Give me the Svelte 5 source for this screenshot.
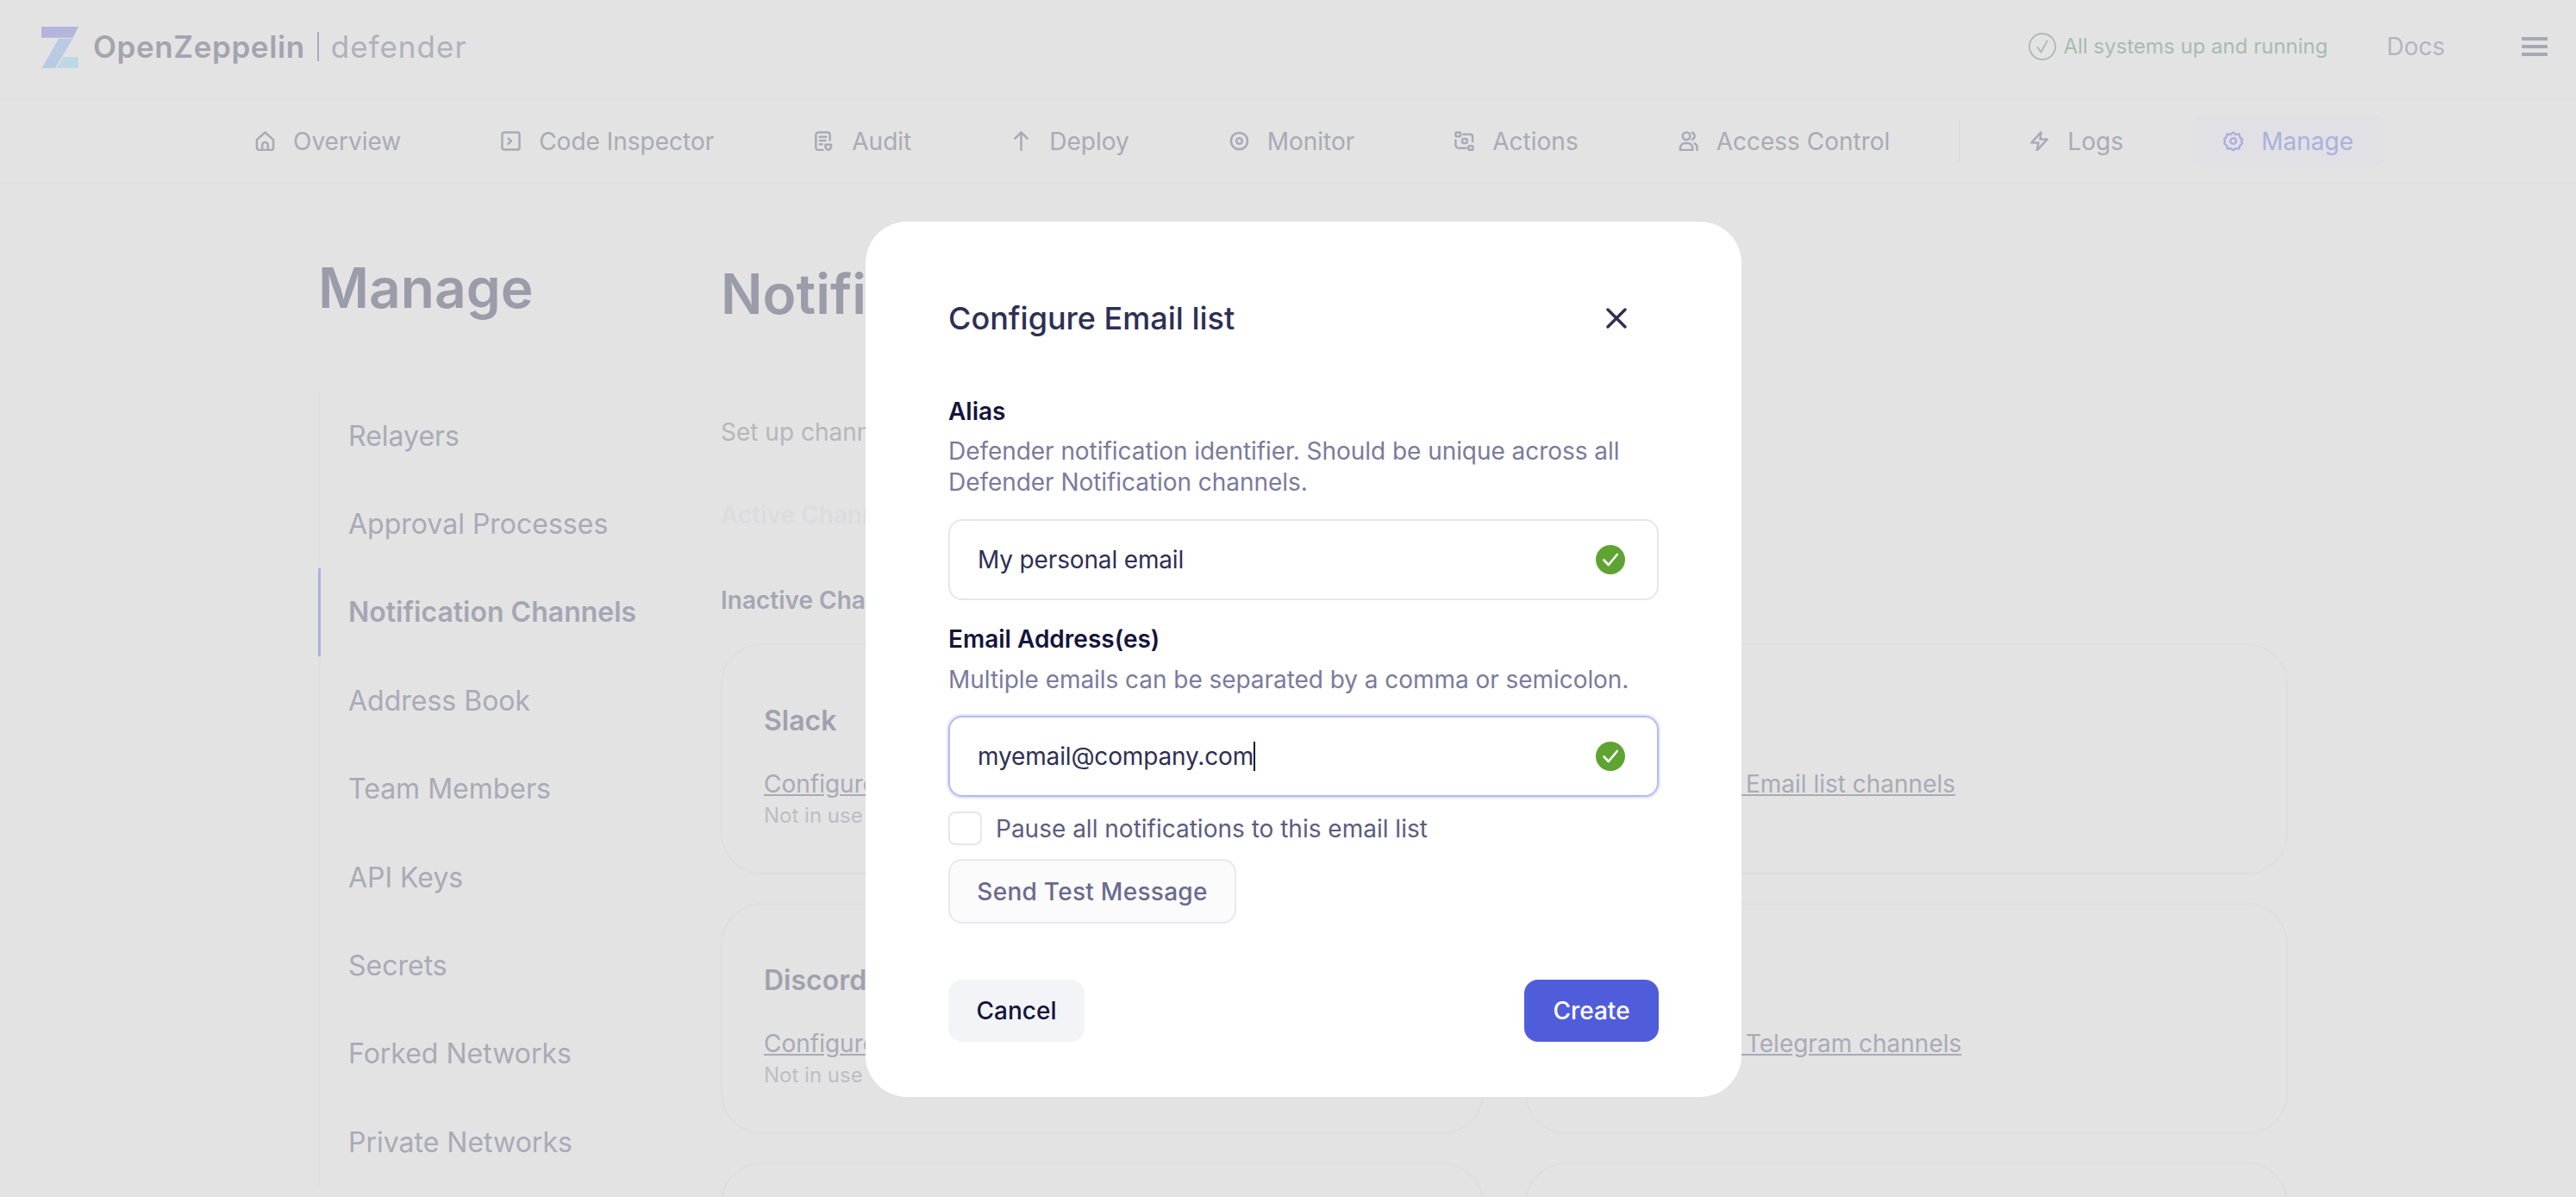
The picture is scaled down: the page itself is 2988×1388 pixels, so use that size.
<script>
  const navItems = [
    { label: 'Overview', icon: 'home' },
    { label: 'Code Inspector', icon: 'code' },
    { label: 'Audit', icon: 'audit' },
    { label: 'Deploy', icon: 'deploy' },
    { label: 'Monitor', icon: 'monitor' },
    { label: 'Actions', icon: 'actions' },
    { label: 'Access Control', icon: 'access' },
  ];

  const sideItems = [
    'Relayers',
    'Approval Processes',
    'Notification Channels',
    'Address Book',
    'Team Members',
    'API Keys',
    'Secrets',
    'Forked Networks',
    'Private Networks',
  ];

  const channels = ['Slack', 'Email', 'Discord', 'Telegram', 'Datadog', 'Webhook'];
  const linkName = { Email: 'Email list' };
</script>

{#snippet navIcon(name)}
  <svg class="nav-icon" viewBox="0 0 24 24" fill="none" stroke="currentColor" stroke-width="2.6" stroke-linecap="round" stroke-linejoin="round">
    {#if name === 'home'}
      <path d="M2 10.5 12 1.6l10 8.9V20a3 3 0 0 1-3 3H5a3 3 0 0 1-3-3z" />
      <path d="M8.5 23v-6a3.5 3.5 0 0 1 7 0v6" />
    {:else if name === 'code'}
      <rect x="1.5" y="1.5" width="21" height="21" rx="2.5" />
      <path d="m9 9 3.5 3L9 15.500" />
    {:else if name === 'audit'}
      <path d="M11 23H5.500a3 3 0 0 1-3-3V4.500a3 3 0 0 1 3-3h11a3 3 0 0 1 3 3v6.500" />
      <path d="M7 7h8M7 11.500h7M7 16h3" />
      <path d="M17.500 23c-2.500-1.200-3.500-2.500-3.500-4.500v-2h7v2c0 2-1 3.300-3.500 4.500z" />
    {:else if name === 'deploy'}
      <path d="M12 23.500V1.500M4.500 9l7.500-7.500L19.500 9" />
    {:else if name === 'monitor'}
      <circle cx="12" cy="12" r="10" />
      <circle cx="12" cy="12" r="3.500" />
    {:else if name === 'actions'}
      <rect x="1.500" y="1.500" width="6" height="5" rx="1.500" />
      <rect x="9.500" y="9.500" width="6" height="5" rx="1.500" />
      <rect x="17" y="18" width="5.500" height="5" rx="1.500" />
      <path d="M11 4h8a3 3 0 0 1 3 3v5.500M14 20.500H5a3.500 3.500 0 0 1-3.500-3.500v-6" />
    {:else if name === 'access'}
      <circle cx="9.500" cy="6" r="4.500" />
      <path d="M2 23v-2.500a6 6 0 0 1 6-6h3a6 6 0 0 1 6 6V23z" />
      <path d="M16.500 1.800a4.500 4.500 0 0 1 0 8.400M19.500 15a6 6 0 0 1 3 5.500V23" />
    {:else if name === 'logs'}
      <path d="M14 1.500 2.500 14H11l-2 9.500L21.500 10H13z" />
    {:else if name === 'manage'}
      <path d="M12 1.500l3 2.700 4-.5 1 3.900 3 2.400-1.500 2.500 1.500 2.500-3 2.400-1 3.900-4-.5-3 2.700-3-2.700-4 .5-1-3.900-3-2.400L2 12.500 .5 10l3-2.400 1-3.900 4 .5z" />
      <circle cx="12" cy="12" r="3.500" />
    {/if}
  </svg>
{/snippet}

{#snippet validIcon()}
  <svg class="valid" viewBox="0 0 34 34">
    <circle cx="17" cy="17" r="17" fill="#5fa332" />
    <path d="m9.500 17.500 5.300 5.500 10-12" fill="none" stroke="#fff" stroke-width="2.600" stroke-linecap="round" stroke-linejoin="round" />
  </svg>
{/snippet}

<div class="page">
  <header class="topbar">
    <div class="brand">
      <svg class="logo" viewBox="0 0 43 48">
        <path d="M0 0h43l-6.500 12.700H0z" fill="#b3b5dd" />
        <path d="M20 13.700h16.500L16 48H.5z" fill="#b9cbe3" />
        <path d="M25.500 35H43v13H17.500z" fill="#bcd9e4" />
      </svg>
      <span class="brand-name">OpenZeppelin</span>
      <span class="brand-sep"></span>
      <span class="brand-product">defender</span>
    </div>
    <div class="status">
      <svg class="status-icon" viewBox="0 0 32 32" fill="none" stroke="currentColor" stroke-width="1.800" stroke-linecap="round" stroke-linejoin="round">
        <circle cx="16" cy="16" r="15" />
        <path d="m10.500 17 4 5.500 7-13" />
      </svg>
      <span>All systems up and running</span>
    </div>
    <span class="docs">Docs</span>
    <div class="burger"><i></i><i></i><i></i></div>
  </header>

  <nav class="tabs">
    {#each navItems as item}
      <div class="tab">
        {@render navIcon(item.icon)}
        <span>{item.label}</span>
      </div>
    {/each}
    <span class="tab-divider"></span>
    <div class="tab tab-logs">
      {@render navIcon('logs')}
      <span>Logs</span>
    </div>
    <div class="tab tab-active">
      {@render navIcon('manage')}
      <span>Manage</span>
    </div>
  </nav>

  <main class="main">
    <aside class="sidebar">
      <h1>Manage</h1>
      <ul class="side-list">
        {#each sideItems as item}
          <li class:active={item === 'Notification Channels'}>{item}</li>
        {/each}
      </ul>
    </aside>

    <section class="content">
      <h1>Notification Channels</h1>
      <p class="intro">Set up channels to receive notifications from Defender.</p>
      <h2 class="active-title">Active Channels</h2>
      <h2 class="inactive-title">Inactive Channels</h2>
      <div class="cards">
        {#each channels as name}
          <div class="card">
            <h3>{name}</h3>
            <a href="#top">Configure your {linkName[name] ?? name} channels</a>
            <small>Not in use</small>
          </div>
        {/each}
      </div>
    </section>
  </main>
</div>

<div class="overlay">
  <div class="modal">
    <div class="modal-head">
      <h2>Configure Email list</h2>
      <svg class="close" viewBox="0 0 24 24" fill="none" stroke="#2d2f55" stroke-width="3.400" stroke-linecap="round">
        <path d="m2 2 20 20M22 2 2 22" />
      </svg>
    </div>

    <div class="label alias-label">Alias</div>
    <p class="hint">Defender notification identifier. Should be unique across all Defender Notification channels.</p>
    <div class="field alias-field">
      <span>My personal email</span>
      {@render validIcon()}
    </div>

    <div class="label email-label">Email Address(es)</div>
    <p class="hint email-hint">Multiple emails can be separated by a comma or semicolon.</p>
    <div class="field focused">
      <span>myemail@company.com<i class="caret"></i></span>
      {@render validIcon()}
    </div>

    <div class="check-row">
      <span class="checkbox"></span>
      <span>Pause all notifications to this email list</span>
    </div>

    <button class="test-btn">Send Test Message</button>

    <div class="modal-foot">
      <button class="cancel">Cancel</button>
      <button class="create">Create</button>
    </div>
  </div>
</div>

<style>
:global(body) {
  margin: 0;
  background: #e3e3e3;
  overflow: hidden;
}

* {
  box-sizing: border-box;
}

.page {
  width: 2988px;
  height: 1388px;
  overflow: hidden;
  background: #e3e3e3;
  font-family: Inter, sans-serif;
  color: #a9aab7;
}

.topbar {
  height: 116px;
  display: flex;
  align-items: center;
  padding: 0 33px 7px 48px;
  border-bottom: 2px solid #e0e0e0;
}

.brand {
  display: flex;
  align-items: center;
  flex: 1;
}

.logo {
  width: 43px;
  height: 48px;
  margin-right: 17px;
  margin-top: 3px;
}

.brand-name {
  font-family: Inter, sans-serif;
  font-size: 35px;
  font-weight: 600;
  letter-spacing: 0.6px;
  color: #a3a4b0;
}

.brand-sep {
  width: 2px;
  height: 34px;
  background: #a9aab7;
  margin: 0 14px;
}

.brand-product {
  font-size: 35px;
  letter-spacing: 1px;
  color: #b0b1bd;
}

.status {
  display: flex;
  align-items: center;
  gap: 8px;
  font-size: 24px;
  color: #a6bcb2;
}

.status-icon {
  width: 32px;
  height: 32px;
}

.docs {
  margin-left: 68px;
  font-size: 28px;
  color: #b3b4c4;
}

.burger {
  margin-left: 89px;
  width: 30px;
  display: flex;
  flex-direction: column;
  gap: 5px;
}

.burger i {
  height: 4px;
  background: #a7a8b6;
}

.tabs {
  height: 97px;
  display: flex;
  align-items: center;
  gap: 44px;
  padding-left: 260px;
  border-bottom: 2px solid #e0e0e0;
}

.tab {
  height: 63px;
  display: flex;
  align-items: center;
  gap: 21px;
  padding: 0 36px;
  border-radius: 16px;
  font-size: 28px;
  color: #a9aab7;
}

.nav-icon {
  width: 23px;
  height: 23px;
  flex-shrink: 0;
}

.tab-divider {
  width: 2px;
  height: 48px;
  background: #dedede;
}

.tab-active {
  background: #e0e0e5;
  color: #acb0dc;
}

.main {
  display: flex;
  padding-left: 369px;
}

.sidebar {
  width: 467px;
  flex-shrink: 0;
}

h1 {
  margin: 0;
  font-size: 64px;
  line-height: 76px;
  font-weight: 600;
  color: #9a9ca9;
}

.sidebar h1 {
  margin: 83px 0 82px;
}

.side-list {
  list-style: none;
  margin: 0;
  padding: 0;
  border-left: 3px solid #e0e0e0;
}

.side-list li {
  height: 102.4px;
  display: flex;
  align-items: center;
  padding-left: 32px;
  font-size: 32px;
  white-space: nowrap;
}

.side-list li.active {
  margin-left: -3px;
  border-left: 3px solid #acb0dc;
  font-weight: 600;
  color: #a5a6b4;
}

.content {
  width: 1818px;
  padding-top: 90px;
}

.intro {
  margin: 104px 0 0;
  font-size: 28px;
  line-height: 36px;
  color: #b5b6bf;
}

.active-title,
.inactive-title {
  margin: 60px 0 0;
  font-size: 28px;
  line-height: 36px;
  font-weight: 600;
  color: #dbdce0;
}

.inactive-title {
  margin-top: 63px;
  color: #a5a6b4;
}

.cards {
  display: grid;
  grid-template-columns: 1fr 1fr;
  gap: 33px 48px;
  margin-top: 32px;
}

.card {
  height: 268px;
  padding: 68px 48px 0;
  border: 2px solid #dedede;
  border-radius: 48px;
}

.card h3 {
  margin: 0;
  font-size: 32px;
  line-height: 40px;
  font-weight: 600;
  color: #a0a1af;
}

.card a {
  display: block;
  margin-top: 35px;
  font-size: 28px;
  line-height: 36px;
  color: #a9aab7;
}

.card small {
  display: block;
  margin-top: 3px;
  font-size: 24px;
  line-height: 32px;
  color: #bcbdc8;
}

.overlay {
  position: fixed;
  inset: 0;
  padding: 257px 0 0 1004px;
  font-family: Inter, sans-serif;
}

.modal {
  width: 1016px;
  height: 1015px;
  padding: 90px 96px 64px;
  background: #fff;
  border-radius: 48px;
  display: flex;
  flex-direction: column;
  align-items: stretch;
}

.modal-head {
  display: flex;
  align-items: center;
  justify-content: space-between;
  padding-right: 37px;
}

.modal-head h2 {
  margin: 0;
  font-size: 36px;
  line-height: 44px;
  font-weight: 500;
  color: #2d2f55;
}

.close {
  width: 24px;
  height: 24px;
}

.label {
  font-size: 28px;
  line-height: 36px;
  font-weight: 600;
  color: #14143c;
}

.alias-label {
  margin-top: 68px;
}

.email-label {
  margin-top: 27px;
}

.hint {
  margin: 10px 0 0;
  font-size: 28px;
  line-height: 36px;
  letter-spacing: -0.05px;
  color: #7a7b9c;
}

.email-hint {
  margin-top: 11px;
}

.field {
  height: 94px;
  margin-top: 25px;
  padding: 0 37px 0 32px;
  display: flex;
  align-items: center;
  justify-content: space-between;
  border: 2px solid #e6e6ec;
  border-radius: 16px;
  font-size: 28px;
  letter-spacing: -0.15px;
  color: #2d2f55;
}

.field.focused {
  margin-top: 24px;
  border-color: #b4baf5;
  box-shadow: 0 0 0 2px #e4e6fc;
}

.valid {
  width: 34px;
  height: 34px;
}

.caret {
  display: inline-block;
  width: 2px;
  height: 34px;
  background: #14143c;
  vertical-align: -7px;
}

.check-row {
  display: flex;
  align-items: center;
  gap: 16px;
  margin-top: 17px;
  font-size: 28px;
  color: #5b5d80;
}

.checkbox {
  width: 39px;
  height: 39px;
  border: 2px solid #e6e6ec;
  border-radius: 8px;
}

button {
  font-family: Inter, sans-serif;
  font-size: 28px;
  font-weight: 500;
}

.test-btn {
  align-self: flex-start;
  width: 334px;
  height: 75px;
  margin-top: 16px;
  padding: 0;
  letter-spacing: 0.28px;
  background: #fbfbfc;
  border: 2px solid #e8e8ee;
  border-radius: 16px;
  color: #6a6b8f;
}

.modal-foot {
  display: flex;
  justify-content: space-between;
  margin-top: 65px;
}

.cancel,
.create {
  height: 72px;
  padding: 0;
  border: 0;
  border-radius: 16px;
}

.cancel {
  width: 158px;
  background: #f3f4f8;
  color: #14143c;
}

.create {
  width: 156px;
  background: #505ddb;
  color: #fff;
}
</style>
